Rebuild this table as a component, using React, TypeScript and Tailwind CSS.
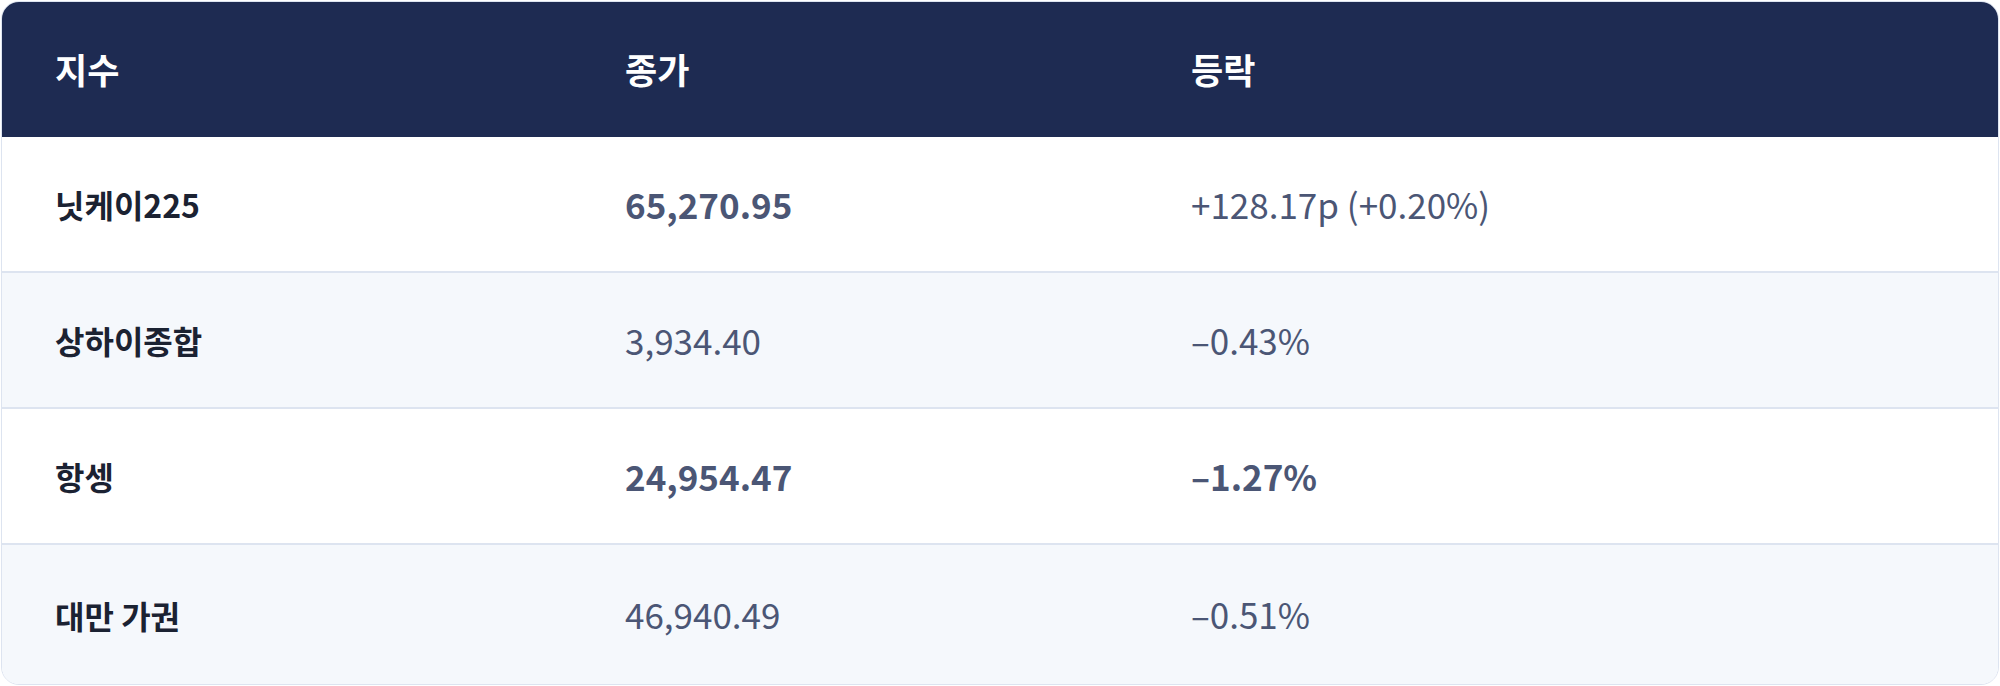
const rows = [
  { name: "닛케이225", close: "65,270.95", change: "+128.17p (+0.20%)", closeBold: true, changeBold: false },
  { name: "상하이종합", close: "3,934.40", change: "–0.43%", closeBold: false, changeBold: false },
  { name: "항셍", close: "24,954.47", change: "–1.27%", closeBold: true, changeBold: true },
  { name: "대만 가권", close: "46,940.49", change: "–0.51%", closeBold: false, changeBold: false },
];

export default function App() {
  return (
    <div className="h-[686px] w-[2000px] bg-white p-[1px] font-['Noto_Sans_CJK_KR','Noto_Sans',sans-serif]">
      <div className="flex h-full flex-col overflow-hidden rounded-[18px] border border-[#dde4f0]">
        <div className="grid h-[135px] shrink-0 grid-cols-[569px_566px_1fr] items-center bg-[#1e2b52] text-[35px] font-bold text-white">
          <div className="pl-[53px]">지수</div>
          <div className="pl-[54px]">종가</div>
          <div className="pl-[54px]">등락</div>
        </div>
        {rows.map((row, i) => (
          <div
            key={row.name}
            className={`grid grid-cols-[569px_566px_1fr] items-center ${
              i === rows.length - 1 ? "flex-1" : "h-[136px] border-b-2 border-[#dde4f0]"
            } ${i % 2 === 1 ? "bg-[#f5f8fc]" : "bg-white"}`}
          >
            <div className="pl-[53px] text-[32px] font-bold text-[#1b2232]">{row.name}</div>
            <div className={`pl-[54px] text-[35px] text-[#4b5675] ${row.closeBold ? "font-semibold" : "font-normal"}`}>{row.close}</div>
            <div className={`pl-[54px] text-[35px] text-[#4b5675] ${row.changeBold ? "font-semibold" : "font-normal"}`}>{row.change}</div>
          </div>
        ))}
      </div>
    </div>
  );
}
